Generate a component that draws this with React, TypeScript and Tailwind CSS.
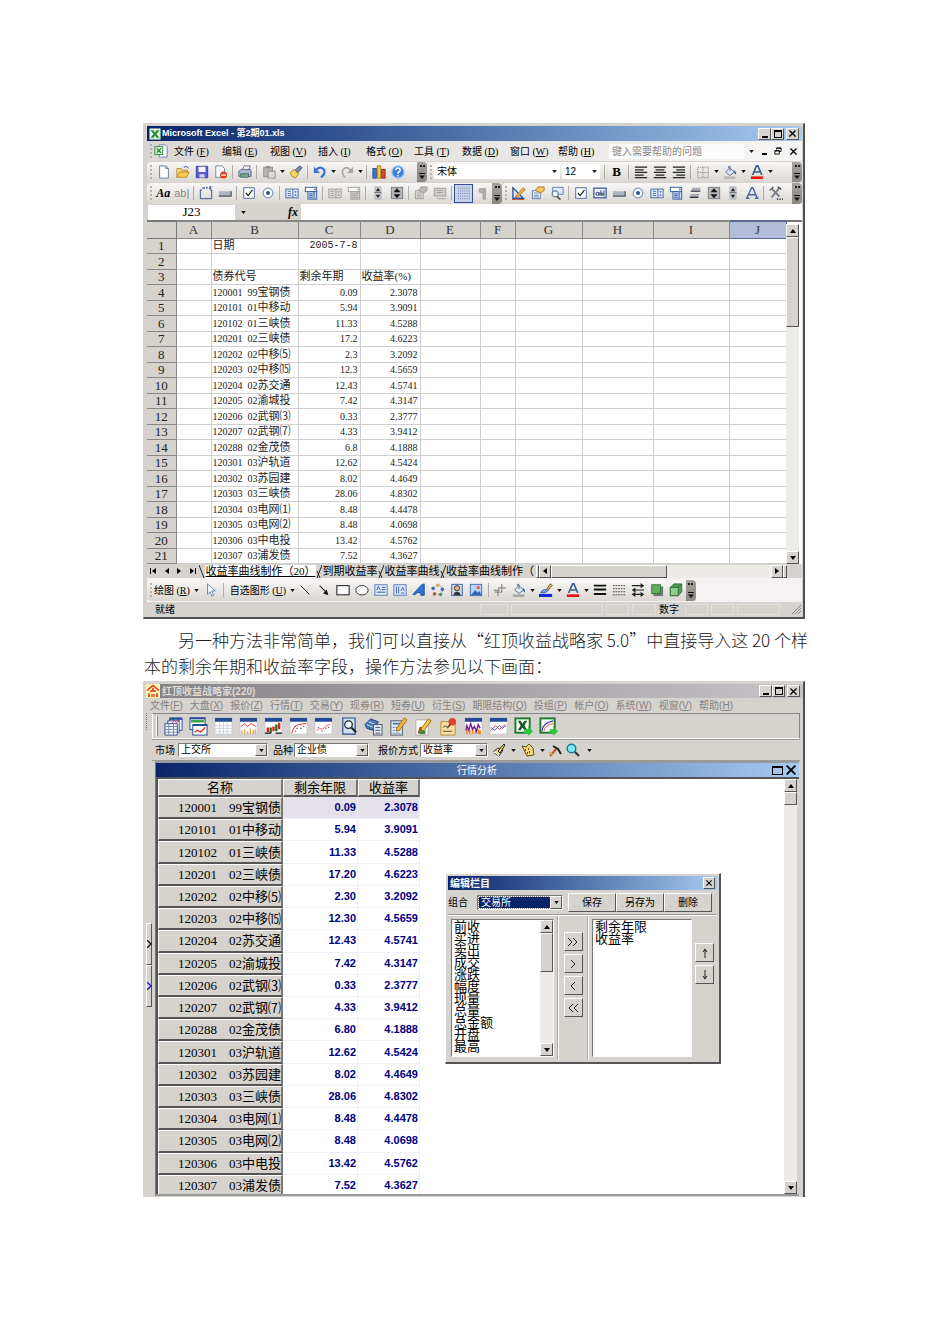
import React from "react";

const SANS = "font-['Liberation_Sans','Noto_Sans_CJK_SC',sans-serif]";
const SERIF = "font-['Liberation_Serif','Noto_Sans_CJK_SC',serif]";
const RAISED = "border border-t-white border-l-white border-r-[#555] border-b-[#555] bg-[#d6d3ce]";
const SUNKEN = "border border-t-[#777] border-l-[#777] border-r-white border-b-white";

type Bond = [string, string, string, string];

const bonds: Bond[] = [
  ["120001", "99宝钢债", "0.09", "2.3078"],
  ["120101", "01中移动", "5.94", "3.9091"],
  ["120102", "01三峡债", "11.33", "4.5288"],
  ["120201", "02三峡债", "17.2", "4.6223"],
  ["120202", "02中移⑸", "2.3", "3.2092"],
  ["120203", "02中移⒂", "12.3", "4.5659"],
  ["120204", "02苏交通", "12.43", "4.5741"],
  ["120205", "02渝城投", "7.42", "4.3147"],
  ["120206", "02武钢⑶", "0.33", "2.3777"],
  ["120207", "02武钢⑺", "4.33", "3.9412"],
  ["120288", "02金茂债", "6.8", "4.1888"],
  ["120301", "03沪轨道", "12.62", "4.5424"],
  ["120302", "03苏园建", "8.02", "4.4649"],
  ["120303", "03三峡债", "28.06", "4.8302"],
  ["120304", "03电网⑴", "8.48", "4.4478"],
  ["120305", "03电网⑵", "8.48", "4.0698"],
  ["120306", "03中电投", "13.42", "4.5762"],
  ["120307", "03浦发债", "7.52", "4.3627"],
];

/* ---------- 16 unit toolbar glyphs ---------- */

const combo = (c: string, f: string) => (
  <>
    <rect x="1" y="3.5" width="14" height="10" fill={f} stroke={c} />
    <path d="M9 3.5v10M3 6h4M3 8.5h4M3 11h4" stroke={c} fill="none" />
    <path d="M10.5 6h3l-1.5 2zM10.5 11h3l-1.5-2z" fill={c} />
  </>
);
const listBox = (c: string, f: string) => (
  <>
    <rect x="1.5" y="1.5" width="13" height="5" fill="#fff" stroke={c} />
    <path d="M11 3h3l-1.500 2z" fill={c} />
    <rect x="4.500" y="6.500" width="10" height="8.500" fill={f} stroke={c} />
    <path d="M6 9h4M6 11h4M6 13h4M11.500 6.500v8" stroke={c} />
  </>
);
const alignLines = (d: string) => <path d={d} stroke="#222" strokeWidth="1.4" />;
const bucket = (bar: string) => (
  <>
    <path d="M3 8l5-5 5 5-5 4z" fill="#dfe9f7" stroke="#476a9c" />
    <path d="M8 7V1.500q-2-1-2 2" fill="none" stroke="#476a9c" />
    <path d="M12 6q4 1 2.500 5q-2-1-2.500-5" fill="#3569b0" />
    <rect x="1" y="13" width="13" height="3" fill={bar} />
  </>
);
const letterA = (bar: string) => (
  <>
    <path d="M3 11.500L7.500 1h1.500l4.500 10.500M5 8h6" fill="none" stroke="#36598f" strokeWidth="1.8" />
    <rect x="1" y="13" width="14" height="3" fill={bar} />
  </>
);

const glyphs: Record<string, React.ReactNode> = {
  new: <path d="M3 1h7l3 3v11H3zM10 1v3h3" fill="#fff" stroke="#53719f" />,
  open: (
    <>
      <path d="M1 14V4h5l1 2h6v3" fill="#f8d878" stroke="#b5822a" />
      <path d="M1 14l3-6h11l-3 6z" fill="#ffc94a" stroke="#b5822a" />
      <path d="M9 3q3-3 5 1" fill="none" stroke="#4a73b8" strokeWidth="1.300" />
    </>
  ),
  save: (
    <>
      <path d="M1.500 1.500h13v13h-13z" fill="#5a5fd0" stroke="#32349a" />
      <rect x="4" y="2" width="8" height="6" fill="#f2f4ff" />
      <rect x="5" y="10.500" width="6" height="4" fill="#c9cdf2" />
    </>
  ),
  perm: (
    <>
      <path d="M2 1h7l3 3v10H2z" fill="#fff" stroke="#6b7a97" />
      <circle cx="11" cy="11.500" r="4" fill="#e03c20" />
      <path d="M8.500 11.500h5" stroke="#fff" strokeWidth="1.600" />
    </>
  ),
  print: (
    <>
      <path d="M5 6l2-5h7l-2 5" fill="#fff" stroke="#667" />
      <path d="M1 7l3-2h10l1 2v6H1z" fill="#a9b8cc" stroke="#4f6075" />
      <path d="M3 10h9v4H3z" fill="#6fb27c" stroke="#4f6075" />
    </>
  ),
  paste: (
    <>
      <rect x="2" y="2.500" width="10" height="11" fill="#b9b7b3" stroke="#8d8b87" />
      <rect x="5" y="1" width="4" height="3" fill="#8d8b87" />
      <rect x="7" y="7" width="8" height="8" fill="#dcdad6" stroke="#8d8b87" />
    </>
  ),
  brush: (
    <>
      <path d="M1 9l5-4 5 5-4 5q-4-1-6-6z" fill="#f6d660" stroke="#a57f22" />
      <path d="M7 6l5-5 3 2-5 6z" fill="#7b86b0" stroke="#454e78" />
    </>
  ),
  undo: (
    <>
      <path d="M3 6q6-6 10 0q1 5-4 8" fill="none" stroke="#3d73d2" strokeWidth="2.600" />
      <path d="M1 2v7h7z" fill="#3d73d2" />
    </>
  ),
  redo: (
    <>
      <path d="M12 6Q7 0 3 6q-1 5 3 8" fill="none" stroke="#a8a6a2" strokeWidth="2" />
      <path d="M15 2v7H8z" fill="#a8a6a2" />
    </>
  ),
  chart: (
    <>
      <rect x="1" y="4" width="4" height="11" fill="#3876cc" stroke="#234e91" />
      <rect x="6" y="1" width="4" height="14" fill="#f4c83c" stroke="#a67f1b" />
      <rect x="11" y="5" width="4" height="10" fill="#d94c32" stroke="#8f2a18" />
    </>
  ),
  help: (
    <>
      <circle cx="8" cy="8" r="7" fill="#3f80dc" stroke="#9cc2f2" strokeWidth="1.500" />
      <path d="M5.500 6q0-2.500 2.500-2.500T10.500 6Q10.500 7.500 8 8.500V10M8 11.500v1.600" fill="none" stroke="#fff" strokeWidth="1.700" />
    </>
  ),
  left: alignLines("M1 2.500h14M1 5.500h10M1 8.500h14M1 11.500h10M1 14.500h14"),
  center: alignLines("M1 2.500h14M3 5.500h10M1 8.500h14M3 11.500h10M1 14.500h14"),
  right: alignLines("M1 2.500h14M5 5.500h10M1 8.500h14M5 11.500h10M1 14.500h14"),
  borders: <path d="M2 2.500h12v12H2zM8 2.500v12M2 8.500h12" fill="none" stroke="#888" strokeDasharray="1.500 1" />,
  fill: bucket("#b9b7b3"),
  fillGray: bucket("#a9a8a5"),
  fontColor: letterA("#f01414"),
  pen: (
    <>
      <path d="M2 11q3-5 6-3l5-7 2 2-6 7q-3 2-7 1z" fill="#7fa6e0" stroke="#2f5597" />
      <path d="M9 7l4-6 2 2-5 5z" fill="#e9c65a" stroke="#8a6a20" />
      <rect x="0" y="12.500" width="15" height="3.500" fill="#1428e6" />
    </>
  ),
  frame: <path d="M1.500 4.500h2M12.500 4.500h2v10h-13v-10M4 1l2.500 2.500M6.500 1L4 3.500M8 2h2M9 1v2M11.500 1h2.500l-2.500 2h2.500" fill="none" stroke="#334f86" strokeWidth="1.100" />,
  button: (
    <>
      <rect x="1" y="6" width="14" height="5.500" fill="#aeb4bf" />
      <path d="M1 11.500h14V6" stroke="#4d5564" strokeWidth="1.400" fill="none" />
    </>
  ),
  check: (
    <>
      <rect x="2" y="2" width="12" height="12" fill="#fff" stroke="#3f5f98" />
      <path d="M4.500 8l2.500 3 5-6.500" fill="none" stroke="#222" strokeWidth="1.400" />
    </>
  ),
  radio: (
    <>
      <circle cx="8" cy="8" r="5.500" fill="#fff" stroke="#7f93b8" strokeWidth="1.300" />
      <circle cx="8" cy="8" r="2.300" fill="#2c4f93" />
    </>
  ),
  combo: combo("#3c5f9c", "#e3edfb"),
  list: listBox("#2f5597", "#c6d9f5"),
  comboOff: combo("#9b9995", "#dddbd7"),
  listOff: listBox("#9b9995", "#d0ceca"),
  scroll: (
    <>
      <rect x="4.500" y="1" width="7" height="14" fill="#c8ccd4" stroke="#999" strokeWidth=".6" />
      <path d="M5.500 6h5L8 2zM5.500 10h5L8 14z" fill="#222" />
      <path d="M4 7.500h8" stroke="#666" />
    </>
  ),
  spin: (
    <>
      <rect x="1.500" y="1.500" width="13" height="13" fill="#b5b8bd" stroke="#777" />
      <path d="M4 7h8L8 2.500zM4 9.500h8L8 14z" fill="#111" />
    </>
  ),
  props: (
    <>
      <rect x="1.500" y="5.500" width="9" height="9" fill="#fff" stroke="#50709f" />
      <path d="M3 8h6M3 10.500h6M3 12.500h6" stroke="#50709f" />
      <path d="M5 5l3-4h7v4l-4 3z" fill="#f1c75a" stroke="#99752a" />
    </>
  ),
  propsOff: (
    <>
      <rect x="1.500" y="5.500" width="9" height="9" fill="#e3e1dd" stroke="#9b9995" />
      <path d="M3 8h6M3 10.500h6M3 12.500h6" stroke="#9b9995" />
      <path d="M5 5l3-4h7v4l-4 3z" fill="#bbb9b5" stroke="#9b9995" />
    </>
  ),
  codeOff: (
    <>
      <path d="M1.500 2.500h13v9h-13z" fill="#d0ceca" stroke="#9b9995" />
      <path d="M4 5h7M4 7.500h7M5 14.500h10" stroke="#9b9995" />
    </>
  ),
  grid: <path d="M1 2.500h14M1 5.500h14M1 8.500h14M1 11.500h14M1 14.500h14" stroke="#43639b" strokeDasharray="1 1.500" />,
  hand: <path d="M4 3h7v12H8V8H5q-3-2-1-5M9 3v12" fill="#b4b2ae" stroke="#a5a39f" />,
  design: (
    <>
      <path d="M1 2l12 12H1z" fill="#d5e4fa" stroke="#2f5597" strokeWidth="1.500" />
      <path d="M4 12l9-10 2 2-9 9z" fill="#f6bd3a" stroke="#96691a" />
      <path d="M0 15.500h14" stroke="#c63a20" />
    </>
  ),
  view: (
    <>
      <path d="M3 1.500h12v8H3z" fill="#dfe9f7" stroke="#5675aa" />
      <circle cx="6" cy="9" r="3.500" fill="#eaf4ff" stroke="#7a8290" strokeWidth="1.300" />
      <path d="M8 12l4 3.500" stroke="#555" strokeWidth="2" />
    </>
  ),
  textField: (
    <>
      <rect x="1" y="2.500" width="14" height="11" fill="#eaf1fc" stroke="#34589a" strokeWidth="1.400" />
      <circle cx="5" cy="9" r="1.700" fill="none" stroke="#1d2f5c" />
      <path d="M7 7v4M9 5v6M12.500 5v7" stroke="#1d2f5c" />
      <circle cx="10.300" cy="9.300" r="1.300" fill="none" stroke="#1d2f5c" />
    </>
  ),
  toggle: (
    <>
      <path d="M5 2h9v4H3zM3 9h10l-2 4H2z" fill="#a5abb7" />
      <path d="M3 6h11M2 13h10" stroke="#333" strokeWidth="1.400" />
    </>
  ),
  plainA: <path d="M2 14L7.500 2H9l5 12M4 10h8M1 14h4M11.500 14h4" fill="none" stroke="#43639b" strokeWidth="1.600" />,
  tools: (
    <>
      <path d="M3 3l9 9M12 2L3 13" stroke="#7a7e88" strokeWidth="2.200" />
      <path d="M1 5l4-4M10 1l4 3" stroke="#454952" strokeWidth="1.500" />
      <path d="M9 15h1.500M12 15h1.500M15 15h1" stroke="#111" strokeWidth="1.700" />
    </>
  ),
  pointer: <path d="M4 1v12l3-3 2 5 2-1-2-5h4z" fill="#eef5ff" stroke="#5c7db2" />,
  line: <path d="M3 3l10 10" stroke="#222" strokeWidth="1.100" />,
  arrow: (
    <>
      <path d="M3 3l8 8" stroke="#222" strokeWidth="1.300" />
      <path d="M13 14l-6-2 4-5z" fill="#111" />
    </>
  ),
  rect: <rect x="1" y="3" width="14" height="10.500" fill="#fff" stroke="#222" strokeWidth="1.200" />,
  oval: <ellipse cx="8" cy="8.300" rx="7" ry="5.400" fill="#fff" stroke="#333" strokeWidth="1.100" />,
  textBox: (
    <>
      <rect x="1" y="2" width="14" height="12" fill="#dce8fa" stroke="#4a74b8" />
      <path d="M3 8l2-4 2 4M9 5h4M9 7.500h4M3 10.500h10" fill="none" stroke="#2f5597" />
    </>
  ),
  textBoxV: (
    <>
      <rect x="1" y="2" width="14" height="12" fill="#dce8fa" stroke="#4a74b8" />
      <path d="M4 4v8M6.500 4v8M9 9l2-4 2 4M9 11.500h4" fill="none" stroke="#2f5597" />
    </>
  ),
  wordArt: <path d="M1 13L11 2l3-1v13h-4v-3H6l-2 2z" fill="#2f74d4" stroke="#1c4f9d" />,
  diagram: (
    <>
      <circle cx="8" cy="8" r="5" fill="none" stroke="#8394b0" strokeDasharray="3 2" />
      <circle cx="8" cy="2.500" r="2" fill="#e0a637" />
      <circle cx="13" cy="7" r="2" fill="#3b67b4" />
      <circle cx="11" cy="13" r="2" fill="#3f9e56" />
      <circle cx="4" cy="12.500" r="2" fill="#c34b32" />
      <circle cx="2.500" cy="6" r="2" fill="#3b67b4" />
    </>
  ),
  clip: (
    <>
      <rect x="2" y="1.500" width="12" height="13" fill="#cfe0f8" stroke="#2f5597" />
      <circle cx="8" cy="6" r="3" fill="#e9b97c" stroke="#222" />
      <path d="M4 14q0-4 4-4t4 4z" fill="#333" />
    </>
  ),
  picture: (
    <>
      <rect x="1.500" y="1.500" width="13" height="13" fill="#bcd5f8" stroke="#3567b2" />
      <path d="M2 14l5-6 3 3 2-2 2.500 5z" fill="#3567b2" />
      <circle cx="10.500" cy="5" r="2" fill="#e7664a" />
    </>
  ),
  crop: <path d="M1 8.500h5.500V5.500H15M5.500 15V8.500M10 1v9.500H2M10 5.500V1" fill="none" stroke="#8f8d89" strokeWidth="1.400" />,
  weight: <path d="M1 3h14M1 7.500h14M1 12.500h14" stroke="#111" strokeWidth="2.200" />,
  dashes: <path d="M1 3h14M1 6.500h14M1 10h14M1 13.500h14" stroke="#333" strokeDasharray="2 1" />,
  arrows: (
    <>
      <path d="M1 3h13M2 8h13M1 13h13" stroke="#222" strokeWidth="1.300" />
      <path d="M11 0l4 3-4 3zM5 5L1 8l4 3zM11 10l4 3-4 3zM5 10l-4 3 4 3z" fill="#222" />
    </>
  ),
  shadow: (
    <>
      <rect x="4" y="4" width="11" height="11" fill="#777" />
      <rect x="2" y="2" width="10" height="10" fill="#5fae5f" stroke="#2d7134" />
    </>
  ),
  cube: (
    <>
      <path d="M1.500 5l4-4h9v9l-4 4.500h-9z" fill="#4d9b50" stroke="#2d6d33" />
      <path d="M1.500 5h9v9.500h-9z" fill="#8ecb8c" stroke="#2d6d33" />
      <path d="M10.500 5l4-4" stroke="#2d6d33" />
    </>
  ),
};

const Glyph = ({ name }: { name: string }) => (
  <svg viewBox="0 0 16 16" className="size-[14px]" aria-hidden="true">
    {glyphs[name]}
  </svg>
);

const Down = () => (
  <svg viewBox="0 0 6 4" className="h-[3px] w-[5px] shrink-0" aria-hidden="true">
    <path d="M0 0h6L3 4z" fill="#111" />
  </svg>
);

const Overflow = ({ h = "h-[21px]" }: { h?: string }) => (
  <button
    aria-label="工具栏选项"
    className={`${h} flex w-[10px] shrink-0 flex-col items-center justify-between rounded-r-sm bg-linear-to-b from-[#a5a29e] to-[#8a8782] py-[3px]`}
  >
    <span className="h-[2px] w-[5px] border-x-2 border-[#222]" />
    <svg viewBox="0 0 6 6" className="size-[6px]" aria-hidden="true">
      <path d="M0 .5h6" stroke="#111" />
      <path d="M0 2.500h6L3 6z" fill="#111" />
    </svg>
  </button>
);

const Grip = () => (
  <span className="flex w-[7px] shrink-0 justify-center">
    <span className="h-[14px] border-l-2 border-dotted border-[#b4b1ac]" />
  </span>
);

/* "|" separator, "v" drop-down arrow, "*name" pressed button */
const Tools = ({ items }: { items: string }) => (
  <>
    {items.split(" ").map((t, i) => {
      if (t === "|")
        return (
          <span key={i} className="flex w-[5px] shrink-0 justify-center">
            <span className="h-[14px] border-l border-[#b0ada8]" />
          </span>
        );
      if (t === "v")
        return (
          <button key={i} aria-label="更多" className="flex w-[8px] shrink-0 justify-center">
            <Down />
          </button>
        );
      const on = t[0] === "*";
      const name = on ? t.slice(1) : t;
      return (
        <button
          key={i}
          aria-label={name}
          className={
            on
              ? "flex h-[19px] w-[19px] shrink-0 items-center justify-center border border-[#2f4f95] bg-[#c9d3e8]"
              : "flex h-[19px] w-[19px] shrink-0 items-center justify-center"
          }
        >
          <Glyph name={name} />
        </button>
      );
    })}
  </>
);

const BAR = "flex items-center rounded-l-sm bg-linear-to-b from-[#f8f7f6] to-[#dad7d2]";

const WindowButtons = () => (
  <div className="flex items-center">
    <button aria-label="最小化" className={`${RAISED} flex h-[12px] w-[13px] items-end justify-center pb-px`}>
      <span className="h-[2px] w-[6px] bg-black" />
    </button>
    <button aria-label="最大化" className={`${RAISED} flex h-[12px] w-[13px] items-center justify-center`}>
      <span className="h-[8px] w-[8px] border border-t-2 border-black" />
    </button>
    <button aria-label="关闭" className={`${RAISED} ml-[2px] flex h-[12px] w-[13px] items-center justify-center`}>
      <Cross />
    </button>
  </div>
);

const Cross = ({ size = "size-[7px]" }: { size?: string }) => (
  <svg viewBox="0 0 8 8" className={size} aria-hidden="true">
    <path d="M.5.5l7 7M7.500.5l-7 7" stroke="#000" strokeWidth="1.500" />
  </svg>
);

const Tri = ({ dir }: { dir: "up" | "down" | "left" | "right" }) => {
  const d = { up: "M0 5h6L3 1z", down: "M0 1h6L3 5z", left: "M5 0v6L1 3z", right: "M1 0v6l4-3z" }[dir];
  return (
    <svg viewBox="0 0 6 6" className="size-[6px]" aria-hidden="true">
      <path d={d} fill="#000" />
    </svg>
  );
};

const VScroll = ({ thumb }: { thumb: string }) => (
  <div className="flex w-[13px] shrink-0 flex-col bg-[#edebe8]">
    <button aria-label="向上" className={`${RAISED} flex h-[13px] items-center justify-center`}>
      <Tri dir="up" />
    </button>
    <div className={`${RAISED} ${thumb}`} />
    <button aria-label="向下" className={`${RAISED} mt-auto flex h-[13px] items-center justify-center`}>
      <Tri dir="down" />
    </button>
  </div>
);

/* ---------- spreadsheet window ---------- */

const excelMenus = [
  ["文件", "F"], ["编辑", "E"], ["视图", "V"], ["插入", "I"], ["格式", "O"],
  ["工具", "T"], ["数据", "D"], ["窗口", "W"], ["帮助", "H"],
];

const columns = ["A", "B", "C", "D", "E", "F", "G", "H", "I", "J"];

const sheetRows: React.ReactNode[][] = [
  ["日期", "2005-7-8", ""],
  ["", "", ""],
  ["债券代号", "剩余年期", "收益率(%)"],
  ...bonds.map(([code, name, term, rate]) => [
    <>
      <span className="text-[10px]">{code}&nbsp; {name.slice(0, 2)}</span>
      {name.slice(2)}
    </>,
    term,
    rate,
  ]),
];

const GRID = "border-r border-b border-[#cfcfcf] p-0";

const Sheet = () => (
  <table className={`${SERIF} h-[344px] w-full table-fixed border-collapse text-[11px] leading-[13px] text-[#222]`}>
    <colgroup>
      <col className="w-[29px]" />
      <col className="w-[35px]" />
      <col className="w-[87px]" />
      <col className="w-[62px]" />
      <col className="w-[60px]" />
      <col className="w-[60px]" />
      <col className="w-[35px]" />
      <col className="w-[67px]" />
      <col className="w-[71px]" />
      <col className="w-[76px]" />
      <col className="w-[57px]" />
    </colgroup>
    <thead>
      <tr className="h-[17px] bg-[#d6d3ce] text-[13px] text-[#333]">
        <th className="border-t-2 border-r border-b border-[#777] p-0" />
        {columns.map((c) => (
          <th
            key={c}
            className={
              c === "J"
                ? "border-t-2 border-r border-b border-[#5a6a94] bg-[#b3bdd8] p-0 font-normal"
                : "border-t-2 border-r border-b border-[#888] p-0 font-normal"
            }
          >
            {c}
          </th>
        ))}
      </tr>
    </thead>
    <tbody>
      {sheetRows.map((r, i) => {
        const label = i === 2;
        return (
          <tr key={i}>
            <th className="border-r border-b border-[#888] bg-[#d6d3ce] p-0 text-[13px] font-normal">{i + 1}</th>
            <td className={GRID} />
            <td className={`${GRID} pl-px whitespace-nowrap`}>{r[0]}</td>
            <td
              className={
                label
                  ? `${GRID} pl-px whitespace-nowrap`
                  : i === 0
                    ? `${GRID} pr-[2px] text-right font-['Liberation_Mono',monospace] text-[10px]`
                    : `${GRID} pr-[2px] text-right text-[10px]`
              }
            >
              {r[1]}
            </td>
            <td className={label ? `${GRID} pl-px whitespace-nowrap` : `${GRID} pr-[2px] text-right text-[10px]`}>
              {r[2]}
            </td>
            {[0, 1, 2, 3, 4, 5].map((k) => (
              <td key={k} className={GRID} />
            ))}
          </tr>
        );
      })}
    </tbody>
  </table>
);

const TabSlash = ({ d }: { d: string }) => (
  <svg viewBox="0 0 6 13" className="h-[13px] w-[6px] shrink-0" aria-hidden="true">
    <path d={d} stroke="#222" fill="none" />
  </svg>
);

const ExcelWindow = () => (
  <section className={`${SANS} border-t border-r-2 border-b-2 border-l border-t-[#d6d3ce] border-r-[#50504e] border-b-[#50504e] border-l-[#d6d3ce] bg-[#d6d3ce] pt-[2px] pr-px pb-px pl-[3px] text-[10px] leading-[13px] text-black`}>
    <header className="flex h-[15px] items-center bg-linear-to-r from-[#0a246a] to-[#a6caf0] pr-[3px] pl-[2px]">
      <svg viewBox="0 0 16 16" className="size-[12px]" aria-hidden="true">
        <rect x="1" y="1" width="14" height="14" fill="#e8f5e4" stroke="#9ac29a" />
        <path d="M2 3h4l2 3 2-3h4l-4 5 4 5h-4L8 10l-2 3H2l4-5z" fill="#2a8a36" />
      </svg>
      <h1 className="ml-px flex-1 text-[9px] font-bold whitespace-nowrap text-white">Microsoft Excel - 第2期01.xls</h1>
      <WindowButtons />
    </header>

    <nav className="flex h-[20px] items-center bg-linear-to-r from-[#dad7d2] to-[#f6f5f4]">
      <Grip />
      <svg viewBox="0 0 16 16" className="mr-[6px] size-[14px]" aria-hidden="true">
        <path d="M6 1h7l2 2v12H6z" fill="#fff" stroke="#5c7db2" />
        <rect x="1" y="3" width="9" height="9" fill="#dff0dc" stroke="#2a8a36" />
        <path d="M3 5l5 5M8 5l-5 5" stroke="#2a8a36" strokeWidth="1.600" />
      </svg>
      {excelMenus.map(([t, k]) => (
        <button key={t} className="w-12 text-left whitespace-nowrap">
          {t}
          <span className={SERIF}>
            {" "}(<u>{k}</u>)
          </span>
        </button>
      ))}
      <input
        aria-label="帮助问题"
        placeholder="键入需要帮助的问题"
        className="ml-[3px] h-[15px] w-0 flex-1 bg-white/80 px-[3px] text-[10px] placeholder:text-[#888]"
      />
      <div className="flex w-[58px] items-center justify-between pr-[5px] pl-[5px]">
        <Down />
        <button aria-label="最小化窗口" className="mt-[6px] h-[2px] w-[5px] bg-black" />
        <button aria-label="还原窗口">
          <svg viewBox="0 0 9 9" className="size-[8px]" aria-hidden="true">
            <path d="M3 3V1h5v4H6M1 4h5v4H1zM3 1.500h5M1 4.500h5" fill="none" stroke="#000" />
          </svg>
        </button>
        <button aria-label="关闭窗口">
          <Cross />
        </button>
      </div>
    </nav>

    <div className="flex h-[21px] items-center">
      <div className={`${BAR} h-[20px] w-[280px] shrink-0`}>
        <Grip />
        <Tools items="new open save perm | print | paste v brush | undo v redo v | chart help" />
        <span className="flex-1" />
        <Overflow h="h-[20px]" />
      </div>
      <div className={`${BAR} h-[20px] min-w-0 flex-1`}>
        <Grip />
        <label className="relative flex h-[15px] w-0 flex-1 items-center bg-white">
          <select aria-label="字体" className="w-full appearance-none pl-[3px]">
            <option>宋体</option>
          </select>
          <span className="pointer-events-none absolute right-[3px]">
            <Down />
          </span>
        </label>
        <label className="relative ml-[2px] flex h-[15px] w-[38px] items-center bg-white">
          <select aria-label="字号" className="w-full appearance-none pl-[3px]">
            <option>12</option>
          </select>
          <span className="pointer-events-none absolute right-[3px]">
            <Down />
          </span>
        </label>
        <span className="w-[2px]" />
        <Tools items="|" />
        <button className="w-[19px] font-['Liberation_Serif',serif] text-[13px] font-bold">B</button>
        <Tools items="| left center right | borders v fill v fontColor v" />
        <span className="w-[18px]" />
        <Overflow h="h-[20px]" />
      </div>
    </div>

    <div className="flex h-[22px] items-center">
      <div className={`${BAR} h-[21px] w-[355px] shrink-0`}>
        <Grip />
        <button className="w-[19px] font-['Liberation_Serif',serif] text-[12px] font-bold italic">Aa</button>
        <button className="w-[19px] text-[11px] text-[#888]">ab|</button>
        <Tools items="| frame button | check radio | combo list | comboOff listOff | scroll spin | propsOff codeOff | *grid hand" />
        <span className="flex-1" />
        <Overflow />
      </div>
      <div className={`${BAR} h-[21px] min-w-0 flex-1`}>
        <Grip />
        <Tools items="design props view | check textField button radio combo list toggle spin scroll plainA | tools" />
        <span className="flex-1" />
        <Overflow />
      </div>
    </div>

    <div className="flex h-[16px] items-center">
      <input aria-label="名称框" defaultValue="J23" className={`${SERIF} ml-px h-[15px] w-[87px] bg-white text-center text-[13px]`} />
      <span className="flex w-[16px] justify-center">
        <Down />
      </span>
      <span className="w-[50px] pr-[3px] text-right font-['Liberation_Serif',serif] text-[12px] font-bold italic">fx</span>
      <input aria-label="编辑栏" className="h-[16px] w-0 flex-1 bg-white" />
    </div>

    <div className="flex bg-white">
      <div className="min-w-0 flex-1">
        <Sheet />
      </div>
      <div className="flex w-[16px] border-t-2 border-[#777] pt-[2px]">
        <VScroll thumb="h-[90px]" />
      </div>
    </div>

    <div className="flex h-[14px] items-center overflow-hidden bg-[#d6d3ce]">
      <div className="flex w-[52px] shrink-0 items-center justify-around">
        <button aria-label="第一张" className="flex items-center"><span className="h-[6px] w-px bg-black" /><Tri dir="left" /></button>
        <button aria-label="上一张" className="flex"><Tri dir="left" /></button>
        <button aria-label="下一张" className="flex"><Tri dir="right" /></button>
        <button aria-label="最后一张" className="flex items-center"><Tri dir="right" /><span className="h-[6px] w-px bg-black" /></button>
      </div>
      <div className={`${SERIF} flex w-[337px] shrink-0 items-center overflow-hidden text-[11px] leading-[13px] whitespace-nowrap`}>
        <TabSlash d="M0 0l5 13" />
        <button className="w-[111px] bg-white underline">收益率曲线制作（20）</button>
        <TabSlash d="M6 0L1 13M1 6l3 7" />
        <button className="w-[56px] text-center">到期收益率</button>
        <TabSlash d="M6 0L1 13M1 6l3 7" />
        <button className="w-[56px] text-center">收益率曲线</button>
        <TabSlash d="M6 0L1 13M1 6l3 7" />
        <button className="text-left">收益率曲线制作（</button>
      </div>
      <div className="flex h-[13px] min-w-0 flex-1 bg-[#edebe8]">
        <span className={`${RAISED} w-[3px]`} />
        <button aria-label="向左" className={`${RAISED} flex w-[12px] items-center justify-center`}><Tri dir="left" /></button>
        <div className={`${RAISED} w-[116px]`} />
        <button aria-label="向右" className={`${RAISED} ml-auto flex w-[12px] items-center justify-center`}><Tri dir="right" /></button>
        <span className={`${RAISED} w-[4px]`} />
      </div>
      <span className="w-[15px] shrink-0" />
    </div>

    <div className="flex h-[24px] items-center bg-[#f6f2f4]">
      <div className={`${BAR} h-[21px] w-[549px] shrink-0`}>
        <Grip />
        <button className="flex items-center gap-[4px] whitespace-nowrap">
          <span>绘图<span className={SERIF}>&nbsp;(<u>R</u>)</span></span>
          <Down />
        </button>
        <span className="w-[3px]" />
        <Tools items="pointer |" />
        <button className="ml-[4px] flex items-center gap-[4px] whitespace-nowrap">
          <span>自选图形<span className={SERIF}>&nbsp;(<u>U</u>)</span></span>
          <Down />
        </button>
        <span className="w-px" />
        <Tools items="line arrow rect oval textBox textBoxV wordArt diagram clip picture | crop fillGray v pen v fontColor v weight dashes arrows shadow cube" />
        <span className="flex-1" />
        <Overflow />
      </div>
    </div>

    <footer className="flex h-[14px] items-center gap-[3px] pr-[22px]">
      <span className="flex-1 pl-[8px]">就绪</span>
      <span className="h-[11px] w-[28px] border border-[#e2e0dc]" />
      <span className="h-[11px] w-[92px] border border-[#e2e0dc]" />
      <span className="h-[11px] w-[23px] border border-[#e2e0dc]" />
      <span className="h-[11px] w-[24px] border border-[#e2e0dc]" />
      <span className="w-[23px]">数字</span>
      <span className="h-[11px] w-[23px] border border-[#e2e0dc]" />
      <span className="h-[11px] w-[23px] border border-[#e2e0dc]" />
      <span className="relative h-[11px] w-[43px] border border-[#e2e0dc]">
        <svg viewBox="0 0 9 9" className="absolute -right-[22px] bottom-0 size-[9px]" aria-hidden="true">
          <path d="M0 9l9-9M3 9l6-6M6 9l3-3" stroke="#888" />
        </svg>
      </span>
    </footer>
  </section>
);

/* ---------- yield strategist window ---------- */

const strategyMenus = [
  ["文件", "F"], ["大盘", "X"], ["报价", "Z"], ["行情", "T"], ["交易", "Y"], ["现券", "R"], ["短券", "U"],
  ["衍生", "S"], ["期限结构", "Q"], ["投组", "P"], ["帐户", "O"], ["系统", "W"], ["视窗", "V"], ["帮助", "H"],
];

const winFrame = (
  <>
    <rect x="1" y="1" width="18" height="17" fill="#fff" stroke="#c5cbd6" />
    <rect x="1" y="1" width="18" height="4" fill="#244a94" />
  </>
);

const bigGlyphs: [string, React.ReactNode][] = [
  ["多窗口", (
    <>
      <path d="M6 1h13v13H6z" fill="#fff" stroke="#244a94" />
      <path d="M6 2h13" stroke="#244a94" strokeWidth="2" />
      <path d="M4 4h12v12H4z" fill="#fff" stroke="#244a94" />
      <path d="M8 7l3-3 2 2 4-3" fill="none" stroke="#d33" />
      <path d="M1 7h13v12H1z" fill="#fff" stroke="#244a94" />
      <path d="M1 10h13M1 13h13M1 16h13M5 7v12M10 7v12" stroke="#6f86b4" />
    </>
  )],
  ["走势窗口", (
    <>
      <rect x="1" y="1" width="16" height="12" fill="#fff" stroke="#244a94" />
      <path d="M2 4.500h14" stroke="#2aa33a" strokeWidth="2.500" />
      <path d="M1 1.500h16" stroke="#244a94" strokeWidth="2" />
      <rect x="4" y="8" width="15" height="11" fill="#fff" stroke="#244a94" />
      <path d="M4 8.500h15" stroke="#244a94" strokeWidth="2" />
      <path d="M6 16l3-2 3 2 5-5" fill="none" stroke="#d22" strokeWidth="1.300" />
    </>
  )],
  ["报价表", <>{winFrame}<path d="M1 9h18M1 12h18M1 15h18M6 5v13M10 5v13M14 5v13" stroke="#ccd3df" /></>],
  ["分时图", <>{winFrame}<path d="M2 10l4-3 3 3 4-3 5 3" fill="none" stroke="#e33" /><path d="M3 18v-4M6 18v-5M9 18v-3M12 18v-6M15 18v-4M17 18v-5" stroke="#eda84c" strokeWidth="1.500" /></>],
  ["K线图", <>{winFrame}<path d="M4 11v5M10 10v5M16 6v7" stroke="#d22" strokeWidth="2.500" /><path d="M7 11v6M13 8v7" stroke="#187a2a" strokeWidth="2.500" /><path d="M1 17h6M12 17h7" stroke="#111" strokeWidth="1.500" /></>],
  ["收益曲线", <>{winFrame}<path d="M3 17q2-8 7-9t8-1" fill="none" stroke="#d22" /><path d="M6 10h1M8 12h1M12 12h1M15 10h1M6 15h1" stroke="#222" strokeWidth="1.200" /></>],
  ["散点图", <>{winFrame}<path d="M3 14l3-2 3 1 4-4 4-1" fill="none" stroke="#e55" /><path d="M4 11h1M8 15h1M12 12h1M15 11h1" stroke="#333" strokeWidth="1.200" /></>],
  ["查询", (
    <>
      <path d="M4 1h13v17H4z" fill="#cfdcf0" stroke="#244a94" strokeWidth="1.200" />
      <circle cx="10" cy="8" r="4" fill="#f4f8fd" stroke="#222" strokeWidth="1.300" />
      <path d="M13 11l5 5" stroke="#222" strokeWidth="2.200" />
    </>
  )],
  ["计算", (
    <>
      <path d="M1 8l6-6 8 3-5 9-7-2z" fill="#4a78b8" stroke="#1f3f78" />
      <path d="M3 8l7 3M5 5l7 3" stroke="#cfe0f5" />
      <rect x="10" y="8" width="9" height="11" fill="#dfe8f4" stroke="#456" />
      <path d="M12 11h5M12 14h5M12 17h5" stroke="#456" />
    </>
  )],
  ["计算器", (
    <>
      <rect x="2" y="4" width="12" height="15" fill="#e8eef7" stroke="#456" />
      <path d="M4 7h8" stroke="#4a78b8" strokeWidth="2" />
      <path d="M4 11h8M4 14h8M4 17h8" stroke="#4a78b8" strokeDasharray="2 1" />
      <path d="M8 12L16 1l3 2-8 11-3 1z" fill="#f4b63c" stroke="#a3701a" />
    </>
  )],
  ["编辑", (
    <>
      <path d="M2 3h13v16H2z" fill="#fff" stroke="#aaa" />
      <path d="M4 17l2-7 3 1-1 7z" fill="#b33" />
      <path d="M7 13L15 2l3 2-8 11z" fill="#f4c83c" stroke="#a3701a" />
      <rect x="6" y="14" width="6" height="4" fill="#3c8a3c" />
    </>
  )],
  ["便签", (
    <>
      <path d="M2 5h15v14H2z" fill="#fbe2a0" stroke="#b98a32" />
      <path d="M4 11l3-2 2 3M4 15h10" fill="none" stroke="#444" />
      <circle cx="14" cy="5" r="4" fill="#e0442c" />
      <path d="M12 8l-3 3" stroke="#7a1c10" strokeWidth="1.500" />
    </>
  )],
  ["成交量", <>{winFrame}<path d="M3 18v-5M6 18v-4M9 18v-5M12 18v-3M15 18v-5M17 18v-4" stroke="#ed8a2c" strokeWidth="2" /><path d="M2 14l1-5 2 5 2-7 2 6 2-3 2 5 2-7 2 4" fill="none" stroke="#7a1f8a" strokeWidth="1.500" /></>],
  ["比较", <>{winFrame}<path d="M2 14l5-5 4 4 6-5" fill="none" stroke="#d33" /><path d="M2 11l4 3 5-5 3 3 4-3" fill="none" stroke="#36c" /></>],
  ["导出表格", (
    <>
      <rect x="1.500" y="1.500" width="15" height="15" fill="#fff" stroke="#167a28" strokeWidth="2" />
      <path d="M4 4h3l2 3 2-3h3l-3 5 3 5h-3l-2-3-2 3H4l3-5z" fill="#0f5e1e" />
      <path d="M11 13h4v-3l5 5-5 5v-3h-4z" fill="#29c83a" />
    </>
  )],
  ["导出曲线", (
    <>
      <rect x="1.500" y="1.500" width="15" height="15" fill="#fff" stroke="#167a28" strokeWidth="2" />
      <path d="M3 15q1-9 12-11" fill="none" stroke="#33a" strokeWidth="1.300" />
      <path d="M5 15q2-7 10-8" fill="none" stroke="#d55" />
      <path d="M11 13h4v-3l5 5-5 5v-3h-4z" fill="#29c83a" />
    </>
  )],
];

const Combo = ({ label, value, width, gap }: { label: string; value: string; width: string; gap: string }) => (
  <label className={`flex items-center ${gap}`}>
    <span className="whitespace-nowrap">{label}</span>
    <span className={`${SUNKEN} ${width} relative flex h-[14px] items-center bg-white`}>
      <select className="w-full appearance-none pl-[2px] leading-[12px]">
        <option>{value}</option>
      </select>
      <span className={`${RAISED} pointer-events-none absolute right-0 flex h-[12px] w-[12px] items-center justify-center`}>
        <Down />
      </span>
    </span>
  </label>
);

const fields = ["前收", "买进", "卖出", "成交", "涨跌", "幅度", "现量", "总量", "总金额", "开盘", "最高"];

const DialogButton = ({ children, w }: { children: React.ReactNode; w: string }) => (
  <button className={`${RAISED} ${w} flex h-[19px] items-center justify-center`}>{children}</button>
);

const Chevron = ({ d }: { d: string }) => (
  <svg viewBox="0 0 12 10" className="h-[10px] w-[12px]" aria-hidden="true">
    <path d={d} fill="none" stroke="#222" />
  </svg>
);

const ListBox = ({ label, items }: { label: string; items: string[] }) => (
  <div className="min-w-0 flex-1 overflow-hidden">
    <select
      aria-label={label}
      size={11}
      className={`${SERIF} -mt-[4px] block h-[142px] w-full overflow-hidden pl-[2px] text-[13px]`}
    >
      {items.map((f) => (
        <option key={f} className="h-[12px] min-h-0 p-0 text-[13px] leading-[12px]">
          {f}
        </option>
      ))}
    </select>
  </div>
);

const FieldDialog = () => (
  <div
    role="dialog"
    aria-label="编辑栏目"
    className={`${RAISED} absolute top-[94px] left-[287px] flex h-[191px] w-[276px] flex-col border-r-2 border-b-2 p-[2px]`}
  >
    <div className="flex h-[14px] shrink-0 items-center bg-linear-to-r from-[#0a246a] to-[#a6caf0] pr-[2px] pl-[2px]">
      <h2 className="flex-1 text-[10px] font-bold text-white">编辑栏目</h2>
      <button aria-label="关闭" className={`${RAISED} flex h-[12px] w-[12px] items-center justify-center`}>
        <Cross size="size-[6px]" />
      </button>
    </div>
    <div className="flex h-[25px] shrink-0 items-center border-b border-[#999]">
      <label htmlFor="group" className="w-[29px]">组合</label>
      <span className={`${SUNKEN} relative flex h-[15px] w-[86px] items-center bg-white p-px`}>
        <select id="group" className="h-[11px] w-[71px] appearance-none bg-[#0a246a] pl-[2px] leading-[11px] text-white outline-1 outline-dotted outline-[#888]">
          <option>交易所</option>
        </select>
        <span className={`${RAISED} pointer-events-none absolute right-0 flex h-[13px] w-[12px] items-center justify-center`}>
          <Down />
        </span>
      </span>
      <span className="w-[5px]" />
      <DialogButton w="w-[48px]">保存</DialogButton>
      <DialogButton w="w-[48px]">另存为</DialogButton>
      <DialogButton w="w-[48px]">删除</DialogButton>
    </div>
    <div className="flex min-h-0 flex-1 border-t border-white">
      <div className="flex w-[110px] border-r border-[#aaa] p-[3px]">
        <div className={`${SUNKEN} flex min-w-0 flex-1 bg-white`}>
          <ListBox label="可选栏目" items={fields} />
          <VScroll thumb="h-[39px]" />
        </div>
      </div>
      <div className="flex w-[30px] flex-col items-center gap-[3px] border-r border-l border-r-[#aaa] border-l-white pt-[16px]">
        <DialogButton w="w-[19px]"><Chevron d="M1 1l4 4-4 4M6 1l4 4-4 4" /></DialogButton>
        <DialogButton w="w-[19px]"><Chevron d="M4 1l4 4-4 4" /></DialogButton>
        <DialogButton w="w-[19px]"><Chevron d="M8 1L4 5l4 4" /></DialogButton>
        <DialogButton w="w-[19px]"><Chevron d="M6 1L2 5l4 4M11 1L7 5l4 4" /></DialogButton>
      </div>
      <div className="flex w-[104px] border-l border-white p-[3px] pr-0">
        <div className={`${SUNKEN} flex min-w-0 flex-1 bg-white`}>
          <ListBox label="已选栏目" items={["剩余年限", "收益率"]} />
        </div>
      </div>
      <div className="flex flex-1 flex-col items-center gap-[3px] pt-[27px]">
        <DialogButton w="w-[19px]"><Chevron d="M6 10V1M4 4l2-3 2 3" /></DialogButton>
        <DialogButton w="w-[19px]"><Chevron d="M6 0v9M4 6l2 3 2-3" /></DialogButton>
      </div>
    </div>
  </div>
);

const NAME_CELL = "border-t border-l border-r-2 border-b-2 border-t-white border-l-white border-r-[#777] border-b-[#555] bg-[#d6d3ce] font-normal";

const QuoteTable = () => (
  <table className="h-[418px] w-[262px] table-fixed border-separate border-spacing-0 text-[13px] leading-[15px]">
    <colgroup>
      <col className="w-[125px]" />
      <col className="w-[75px]" />
      <col className="w-[62px]" />
    </colgroup>
    <thead>
      <tr className={`${SERIF} h-[18px]`}>
        {["名称", "剩余年限", "收益率"].map((h) => (
          <th key={h} className={`${NAME_CELL} p-0`}>{h}</th>
        ))}
      </tr>
    </thead>
    <tbody>
      {bonds.map(([code, name, term, rate], i) => (
        <tr key={code}>
          <th className={`${NAME_CELL} ${SERIF} p-0 pl-[19px]`}>
            <span className="flex justify-between whitespace-nowrap">
              <span>{code}</span>
              <span>{name}</span>
            </span>
          </th>
          {[Number(term).toFixed(2), rate].map((v, k) => (
            <td
              key={k}
              className={
                i === 0
                  ? "border-r border-b border-[#eef0f8] bg-[#e4e1ea] p-0 pr-px text-right text-[11px] font-bold text-[#000080]"
                  : "border-r border-b border-[#eef0f8] p-0 pr-px text-right text-[11px] font-bold text-[#000080]"
              }
            >
              {v}
            </td>
          ))}
        </tr>
      ))}
    </tbody>
  </table>
);

const SideTab = ({ color }: { color: string }) => (
  <button aria-label="展开" className={`${RAISED} flex h-[42px] items-center`}>
    <svg viewBox="0 0 5 8" className="h-[8px] w-[5px] shrink-0" aria-hidden="true">
      <path d="M0 0l4 4-4 4" fill="none" stroke={color} strokeWidth="1.300" />
    </svg>
  </button>
);

const StrategyWindow = () => (
  <section className={`${SANS} border-t border-r-2 border-l border-t-[#d6d3ce] border-r-[#50504e] border-l-[#d6d3ce] bg-[#d6d3ce] pt-[2px] pb-px pl-[2px] text-[10px] leading-[13px] text-black`}>
    <header className="flex h-[14px] items-center bg-linear-to-r from-[#848284] to-[#c6c3c6] pr-[3px]">
      <svg viewBox="0 0 14 14" className="size-[14px]" aria-hidden="true">
        <rect width="14" height="14" fill="#fff6b0" />
        <path d="M1 6.500L7 1.500l6 5M4 7h6M7 4v3" fill="none" stroke="#e03020" strokeWidth="1.500" />
        <path d="M3 9v4M6 10v3M8 10v3M11 9v4M2 12h2M10 12h2" stroke="#e03020" strokeWidth="1.300" />
      </svg>
      <h1 className="ml-[2px] flex-1 text-[10px] font-bold text-[#dedbd6]">红顶收益战略家(220)</h1>
      <WindowButtons />
    </header>

    <nav className="flex h-[15px] items-center gap-[7px] pl-[4px] text-[#848284]">
      {strategyMenus.map(([t, k]) => (
        <button key={t} className="whitespace-nowrap">
          {t}(<u>{k}</u>)
        </button>
      ))}
    </nav>

    <div className="flex">
      <aside className="flex w-[6px] shrink-0 flex-col">
        <span className="mb-[193px] h-[17px] border-l border-dotted border-[#777]" />
        <SideTab color="#111" />
        <SideTab color="#1414e0" />
      </aside>

      <div className="min-w-0 flex-1 pr-[3px]">
        <div className="flex h-[26px] items-center border border-t-[#888] border-r-[#888] border-b-white border-l-white pl-[3px]">
          <span className="mr-[3px] h-[20px] w-[2px] border-r border-l border-r-[#888] border-l-white" />
          {bigGlyphs.map(([name, art]) => (
            <button key={name} aria-label={name} className="flex w-[25px] justify-center">
              <svg viewBox="0 0 20 20" className="size-[19px]" aria-hidden="true">
                {art}
              </svg>
            </button>
          ))}
        </div>
        <div className="flex h-[22px] items-center border-t border-b border-t-[#999] border-b-[#999] pl-[3px]">
          <Combo label="市场" value="上交所" width="w-[90px]" gap="gap-[3px]" />
          <span className="w-[5px]" />
          <Combo label="品种" value="企业债" width="w-[75px]" gap="gap-px" />
          <span className="w-[9px]" />
          <Combo label="报价方式" value="收益率" width="w-[68px]" gap="gap-[2px]" />
          <div className="ml-[4px] flex items-center">
            <button aria-label="画笔" className="w-[15px]">
              <svg viewBox="0 0 14 14" className="size-[14px]" aria-hidden="true">
                <path d="M1 9l5-4 5 2-4 6z" fill="#e6d48a" stroke="#333" />
                <path d="M1 9l3 1 3 3" fill="none" stroke="#fff" />
                <path d="M6 8l6-7 1 1-5 8z" fill="#f0dc50" stroke="#222" />
              </svg>
            </button>
            <span className="flex w-[12px] justify-center"><Down /></span>
            <button aria-label="标记" className="ml-[2px] w-[15px]">
              <svg viewBox="0 0 14 14" className="size-[14px]" aria-hidden="true">
                <path d="M1 3l4 1 3-3 4 4 1 7-7 1z" fill="#f6d878" stroke="#6a4a10" />
                <path d="M4 7h1M7 6h1M8 9h1M6 10h1" stroke="#222" strokeWidth="1.500" />
              </svg>
            </button>
            <span className="flex w-[12px] justify-center"><Down /></span>
            <button aria-label="设置" className="w-[17px]">
              <svg viewBox="0 0 14 14" className="size-[14px]" aria-hidden="true">
                <path d="M2 13l7-8" stroke="#b8562a" strokeWidth="2" />
                <path d="M5 3l5 3 3 5" fill="none" stroke="#222" strokeWidth="2" />
                <path d="M1 9l4 3" stroke="#e0b030" strokeWidth="1.500" />
              </svg>
            </button>
            <button aria-label="放大" className="ml-px w-[15px]">
              <svg viewBox="0 0 14 14" className="size-[14px]" aria-hidden="true">
                <circle cx="5.500" cy="5.500" r="4.300" fill="#7fe6f2" stroke="#147a9a" strokeWidth="1.400" />
                <path d="M9 9l4 4" stroke="#333" strokeWidth="2.200" />
              </svg>
            </button>
            <span className="flex w-[16px] justify-center"><Down /></span>
          </div>
        </div>

        <div className="mr-px ml-[3px] border-t-2 border-b-2 border-l border-t-[#999] border-b-[#999] border-l-[#777]">
          <div className="flex h-[14px] items-center bg-linear-to-r from-[#0a246a] to-[#a6caf0] pr-[3px]">
            <h2 className="flex-1 pl-[26px] text-center text-white">行情分析</h2>
            <button aria-label="最大化" className="mr-[3px] h-[9px] w-[11px] border border-t-2 border-black" />
            <button aria-label="关闭">
              <Cross size="size-[10px]" />
            </button>
          </div>
          <div className="relative flex h-[417px] overflow-visible border-t-2 border-l-2 border-t-[#555] border-l-[#555] bg-white">
            <div className="min-w-0 flex-1 overflow-hidden">
              <QuoteTable />
            </div>
            <VScroll thumb="h-[13px]" />
            <span className="w-[2px] bg-[#d6d3ce]" />
            <FieldDialog />
          </div>
        </div>
      </div>
    </div>
  </section>
);

export default function App() {
  return (
    <main className="bg-white pt-[123px] pr-[145px] pb-[146px] pl-[143px]">
      <ExcelWindow />
      <p className="-mr-[8px] mt-[8px] mb-[2px] pl-px indent-[34px] font-['Noto_Sans_CJK_SC',sans-serif] text-[17px] leading-[26px] font-light text-[#222]">
        另一种方法非常简单，我们可以直接从“红顶收益战略家 5.0”中直接导入这 20 个样本的剩余年期和收益率字段，操作方法参见以下画面：
      </p>
      <StrategyWindow />
    </main>
  );
}
